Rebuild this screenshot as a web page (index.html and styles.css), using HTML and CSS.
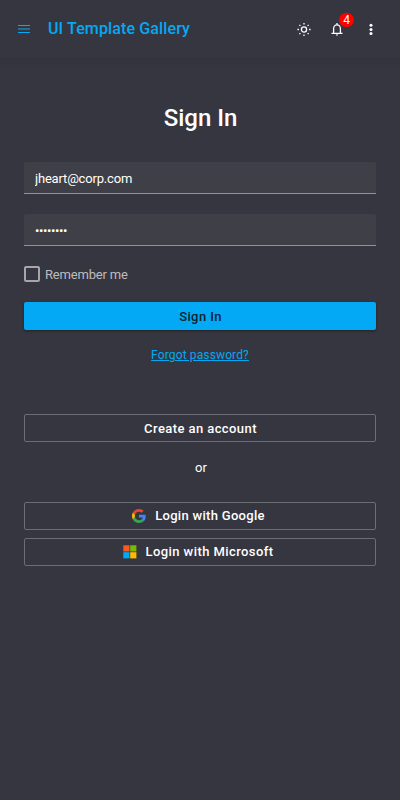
FILE: index.html
```
<!DOCTYPE html>
<html lang="en">
<head>
<meta charset="utf-8">
<title>UI Template Gallery</title>
<link rel="stylesheet" href="styles.css">
</head>
<body>
<header class="toolbar">
  <button class="icon-button menu" aria-label="Menu">
    <svg width="12" height="8" viewBox="0 0 12 8" fill="currentColor"><path d="M0 0h12v1H0zM0 3.5h12v1H0zM0 7h12v1H0z"/></svg>
  </button>
  <span class="brand">UI Template Gallery</span>
  <div class="actions">
    <button class="icon-button" aria-label="Theme">
      <svg width="14" height="14" viewBox="0 0 14 14" fill="none" stroke="currentColor" stroke-width="1.3"><circle cx="7" cy="7.5" r="2.6"/><path d="M7 .9v1.5M7 12.4v1.5M.4 7.5h1.5M12.1 7.5h1.5M2.4 2.9l1 1M10.6 11.1l1 1M2.4 12.1l1-1M10.6 3.9l1-1"/></svg>
    </button>
    <button class="icon-button" aria-label="Notifications">
      <svg width="12" height="14" viewBox="0 0 12 14" fill="none" stroke="currentColor" stroke-width="1.3"><path d="M2.6 11V6.5a3.4 3.7 0 0 1 6.8 0v4.5M.5 11.4h11M6 1v1.7"/><path d="M4.7 12.6h2.6L6 13.9z" fill="currentColor" stroke="none"/></svg>
      <span class="badge">4</span>
    </button>
    <button class="icon-button more" aria-label="More">
      <svg width="4" height="12" viewBox="0 0 4 12" fill="currentColor"><circle cx="2" cy="2.2" r="1.5"/><circle cx="2" cy="6.5" r="1.5"/><circle cx="2" cy="10.5" r="1.5"/></svg>
    </button>
  </div>
</header>
<main class="card">
  <h1 class="title">Sign In</h1>
  <form class="form">
    <input class="field" type="text" value="jheart@corp.com" aria-label="Email">
    <input class="field password" type="password" value="password" aria-label="Password">
    <label class="remember"><span class="checkbox"></span><span class="remember-text">Remember me</span></label>
    <button class="button primary" type="button">Sign In</button>
    <a class="forgot" href="#">Forgot password?</a>
    <button class="button create" type="button">Create an account</button>
    <span class="or">or</span>
    <button class="button social google" type="button">
      <svg width="14" height="14" viewBox="0 0 48 48"><path fill="#ea4335" d="M24 9.5c3.54 0 6.71 1.22 9.21 3.6l6.85-6.85C35.9 2.38 30.47 0 24 0 14.62 0 6.51 5.38 2.56 13.22l7.98 6.19C12.43 13.72 17.74 9.5 24 9.5z"/><path fill="#4285f4" d="M46.98 24.55c0-1.57-.15-3.09-.38-4.55H24v9.02h12.94c-.58 2.96-2.26 5.48-4.78 7.18l7.73 6c4.51-4.18 7.09-10.36 7.09-17.65z"/><path fill="#fbbc05" d="M10.53 28.59A14.5 14.5 0 0 1 9.77 24c0-1.6.27-3.14.76-4.59l-7.98-6.19A23.9 23.9 0 0 0 0 24c0 3.88.92 7.54 2.56 10.78z"/><path fill="#34a853" d="M24 48c6.48 0 11.93-2.13 15.89-5.81l-7.73-6c-2.15 1.45-4.92 2.3-8.16 2.3-6.26 0-11.57-4.22-13.47-9.91l-7.98 6.19C6.51 42.62 14.62 48 24 48z"/></svg>
      <span>Login with Google</span>
    </button>
    <button class="button social microsoft" type="button">
      <svg width="14" height="14" viewBox="0 0 14 14"><path fill="#ff5722" d="M.3.3h6.2v6.2H.3z"/><path fill="#7cb900" d="M7.2.3h6.2v6.2H7.2z"/><path fill="#03a9f4" d="M.3 7.2h6.2v6.2H.3z"/><path fill="#ffb900" d="M7.2 7.2h6.2v6.2H7.2z"/></svg>
      <span>Login with Microsoft</span>
    </button>
  </form>
</main>
</body>
</html>
```
FILE: styles.css
```
* {
  box-sizing: border-box;
}

body {
  margin: 0;
  min-height: 100vh;
  background: #363640;
  color: #fff;
  font: 13px/16px Roboto, sans-serif;
}

button,
input {
  margin: 0;
  font: inherit;
  color: inherit;
}

.toolbar {
  display: flex;
  align-items: center;
  height: 58px;
  padding: 0 13.5px 0 8px;
  box-shadow: 0 2px 8px rgba(0, 0, 0, 0.1);
}

.icon-button {
  position: relative;
  display: flex;
  align-items: center;
  justify-content: center;
  width: 33px;
  height: 32px;
  padding: 0;
  border: 0;
  background: none;
}

.menu {
  width: 32px;
  color: #03a9f4;
}

.more {
  padding-left: 1px;
}

.brand {
  margin-left: 8px;
  color: #03a9f4;
  font-size: 16px;
  font-weight: 500;
  letter-spacing: 0.13px;
}

.actions {
  display: flex;
  margin-left: auto;
}

.badge {
  position: absolute;
  top: 0;
  left: 18.5px;
  width: 15px;
  height: 14px;
  border-radius: 7px;
  background: #f00;
  font-size: 12px;
  line-height: 14px;
  text-align: center;
}

.card {
  padding: 44px 24px 0;
}

.title {
  margin: 0 0 28px;
  padding-left: 1px;
  font-size: 24px;
  line-height: 32px;
  font-weight: 500;
  text-align: center;
}

.form {
  display: flex;
  flex-direction: column;
}

.field {
  width: 100%;
  height: 32px;
  margin-bottom: 20px;
  padding: 1px 11px 0;
  border: 0;
  border-bottom: 1px solid #929298;
  border-radius: 2px 2px 0 0;
  outline: 0;
  background: #3f3f48;
  letter-spacing: -0.18px;
}

.password {
  letter-spacing: -0.4px;
}

.remember {
  display: flex;
  align-items: center;
  gap: 5px;
  height: 16px;
  margin-bottom: 20px;
  color: #bcbcbf;
  letter-spacing: -0.18px;
}

.remember-text {
  padding-top: 2px;
}

.checkbox {
  width: 16px;
  height: 16px;
  border: 2px solid #a5a5aa;
  border-radius: 2px;
}

.button {
  display: flex;
  align-items: center;
  justify-content: center;
  height: 28px;
  padding: 0;
  border: 1px solid #6c6c73;
  border-radius: 2px;
  background: none;
  font-weight: 500;
  letter-spacing: 0.5px;
}

.primary {
  padding: 2px 0 0 1px;
  border: 0;
  background: #03a9f4;
  color: #0b222f;
  letter-spacing: 0.4px;
  box-shadow: 0 1px 3px rgba(0, 0, 0, 0.4);
}

.forgot {
  align-self: center;
  margin: 17px 0 51px;
  color: #03a9f4;
  font-size: 12px;
  letter-spacing: 0.13px;
}

.create {
  padding: 2px 0 0 1px;
  letter-spacing: 0.42px;
}

.or {
  margin: 18px 0 26px;
  padding-left: 2px;
  text-align: center;
}

.social {
  gap: 9px;
}

.google {
  padding-right: 3px;
  letter-spacing: 0.3px;
}

.microsoft {
  margin-top: 8px;
  padding-right: 4px;
  letter-spacing: 0.42px;
}
```
